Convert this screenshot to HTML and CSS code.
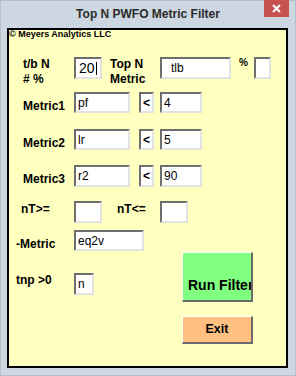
FILE: index.html
```html
<!DOCTYPE html>
<html lang="en">
<head>
    <meta charset="UTF-8">
    <title>Top N PWFO Metric Filter</title>
    <link rel="stylesheet" href="styles.css">
</head>
<body>
    <div class="window">
        <!-- Title Bar -->
        <div class="titlebar">
            <span></span>
            <div class="title">Top N PWFO Metric Filter</div>
            <div class="close">
                <svg width="9" height="9" viewBox="0 0 9 9">
                    <path d="M1 1 L8 8 M8 1 L1 8" stroke="#fff" stroke-width="2"/>
                </svg>
            </div>
        </div>

        <!-- Form Panel -->
        <div class="panel">
            <div class="copyright">© Meyers Analytics LLC</div>

            <div class="row row-top">
                <div class="lbl">t/b N<br># %</div>
                <div class="field w-num big">20<span class="caret"></span></div>
                <div class="lbl lbl-topn">Top N<br>Metric</div>
                <div class="field w-tlb pad-wide">tlb</div>
                <div class="pct">%</div>
                <div class="field w-pct"></div>
            </div>

            <div class="row row-m1">
                <div class="lbl lbl-mid">Metric1</div>
                <div class="field w-metric">pf</div>
                <div class="field op">&lt;</div>
                <div class="field w-val">4</div>
            </div>

            <div class="row row-m2">
                <div class="lbl lbl-mid">Metric2</div>
                <div class="field w-metric">lr</div>
                <div class="field op">&lt;</div>
                <div class="field w-val">5</div>
            </div>

            <div class="row row-m3">
                <div class="lbl lbl-mid">Metric3</div>
                <div class="field w-metric tall">r2</div>
                <div class="field op tall">&lt;</div>
                <div class="field w-val tall">90</div>
            </div>

            <div class="row row-nt">
                <div class="lbl lbl-nt">nT&gt;=</div>
                <div class="field w-num tall"></div>
                <div class="lbl lbl-nt2">nT&lt;=</div>
                <div class="field w-num tall"></div>
            </div>

            <div class="bottom">
                <div class="bottom-left">
                    <div class="row">
                        <div class="lbl lbl-mid lbl-neg">-Metric</div>
                        <div class="field w-neg">eq2v</div>
                    </div>
                    <div class="row row-tnp">
                        <div class="lbl lbl-neg">tnp &gt;0</div>
                        <div class="field w-tnp tall">n</div>
                    </div>
                </div>
                <div class="bottom-right">
                    <div class="btn btn-run">Run Filter</div>
                    <div class="btn btn-exit">Exit</div>
                </div>
            </div>
        </div>
    </div>
</body>
</html>
```

FILE: styles.css
```css
/* General Styles */
body {
    margin: 0;
    padding: 0;
    font-family: 'Liberation Sans', Arial, sans-serif;
    color: #000;
}

.window {
    width: 296px;
    height: 376px;
    box-sizing: border-box;
    border: 1px solid #b3bfcb;
    background: #cdd7e1;
    display: flex;
    flex-direction: column;
}

/* Title Bar */
.titlebar {
    height: 27px;
    display: grid;
    grid-template-columns: 1fr auto 1fr;
    align-items: start;
}

.title {
    padding-top: 6px;
    font-size: 12px;
    line-height: 14px;
    font-weight: bold;
    color: #2b2b2b;
    white-space: nowrap;
}

.close {
    justify-self: end;
    margin-top: -1px;
    margin-right: 6px;
    width: 25px;
    height: 17px;
    background: #c75050;
    display: flex;
    align-items: center;
    justify-content: center;
}

/* Form Panel */
.panel {
    margin: 0 7px 0 6px;
    height: 340px;
    box-sizing: border-box;
    border: 2px solid #000;
    background: #ffffc0;
}

.copyright {
    font-size: 9px;
    line-height: 9px;
    font-weight: bold;
}

.row {
    display: flex;
    align-items: flex-start;
}

.row-top { margin-top: 18px; }
.row-m1 { margin-top: 5px; }
.row-m2 { margin-top: 15px; }
.row-m3 { margin-top: 14px; }
.row-nt { margin-top: 14px; }
.row-tnp { margin-top: 21px; }

/* Labels */
.lbl {
    width: 65px;
    box-sizing: border-box;
    padding-left: 14px;
    font-size: 12px;
    line-height: 15px;
    font-weight: bold;
    white-space: nowrap;
}

.lbl-mid { padding-top: 7px; }

.lbl-topn {
    width: 50px;
    margin-left: 8px;
    padding-left: 0;
}

.lbl-nt {
    padding-left: 12px;
    padding-top: 1px;
}

.lbl-nt2 {
    width: 43px;
    margin-left: 15px;
    padding-left: 0;
    padding-top: 1px;
}

.lbl-neg { padding-left: 7px; }

.pct {
    width: 15px;
    margin-left: 8px;
    font-size: 10px;
    line-height: 12px;
    font-weight: bold;
}

/* Text Fields */
.field {
    height: 21px;
    box-sizing: border-box;
    border-style: solid;
    border-width: 2px;
    border-color: #6e6e6e #e2e2e2 #e2e2e2 #6e6e6e;
    background: #fff;
    padding-left: 2px;
    font-size: 12px;
    display: flex;
    align-items: center;
    white-space: nowrap;
    overflow: hidden;
}

.field.tall,
.row-top .field { height: 22px; }

.field.big { font-size: 14px; padding-left: 3px; }
.field.pad-wide { padding-left: 9px; }

.caret {
    display: inline-block;
    width: 1px;
    height: 13px;
    margin-left: 1px;
    background: #000;
}

.w-num { width: 28px; }
.w-tlb { width: 71px; }
.w-pct { width: 17px; }
.w-metric { width: 56px; }
.w-val { width: 42px; margin-left: 6px; }
.w-neg { width: 70px; }
.w-tnp { width: 20px; }

.field.op {
    width: 15px;
    margin-left: 9px;
    padding-left: 0;
    justify-content: center;
    font-weight: bold;
}

/* Bottom Section */
.bottom {
    display: flex;
}

.bottom-left {
    width: 173px;
    padding-top: 7px;
}

.bottom-right {
    padding-top: 29px;
}

/* Buttons */
.btn {
    width: 71px;
    box-sizing: border-box;
    border-style: solid;
    border-width: 1px 2px 2px 1px;
    border-color: #fff #6b6b6b #6b6b6b #fff;
    font-weight: bold;
    white-space: nowrap;
    overflow: hidden;
}

.btn-run {
    height: 50px;
    background: #80ff80;
    padding: 24px 0 0 5px;
    font-size: 14px;
    line-height: 16px;
}

.btn-exit {
    height: 28px;
    margin-top: 14px;
    background: #ffc080;
    text-align: center;
    font-size: 12.5px;
    line-height: 25px;
}
```
